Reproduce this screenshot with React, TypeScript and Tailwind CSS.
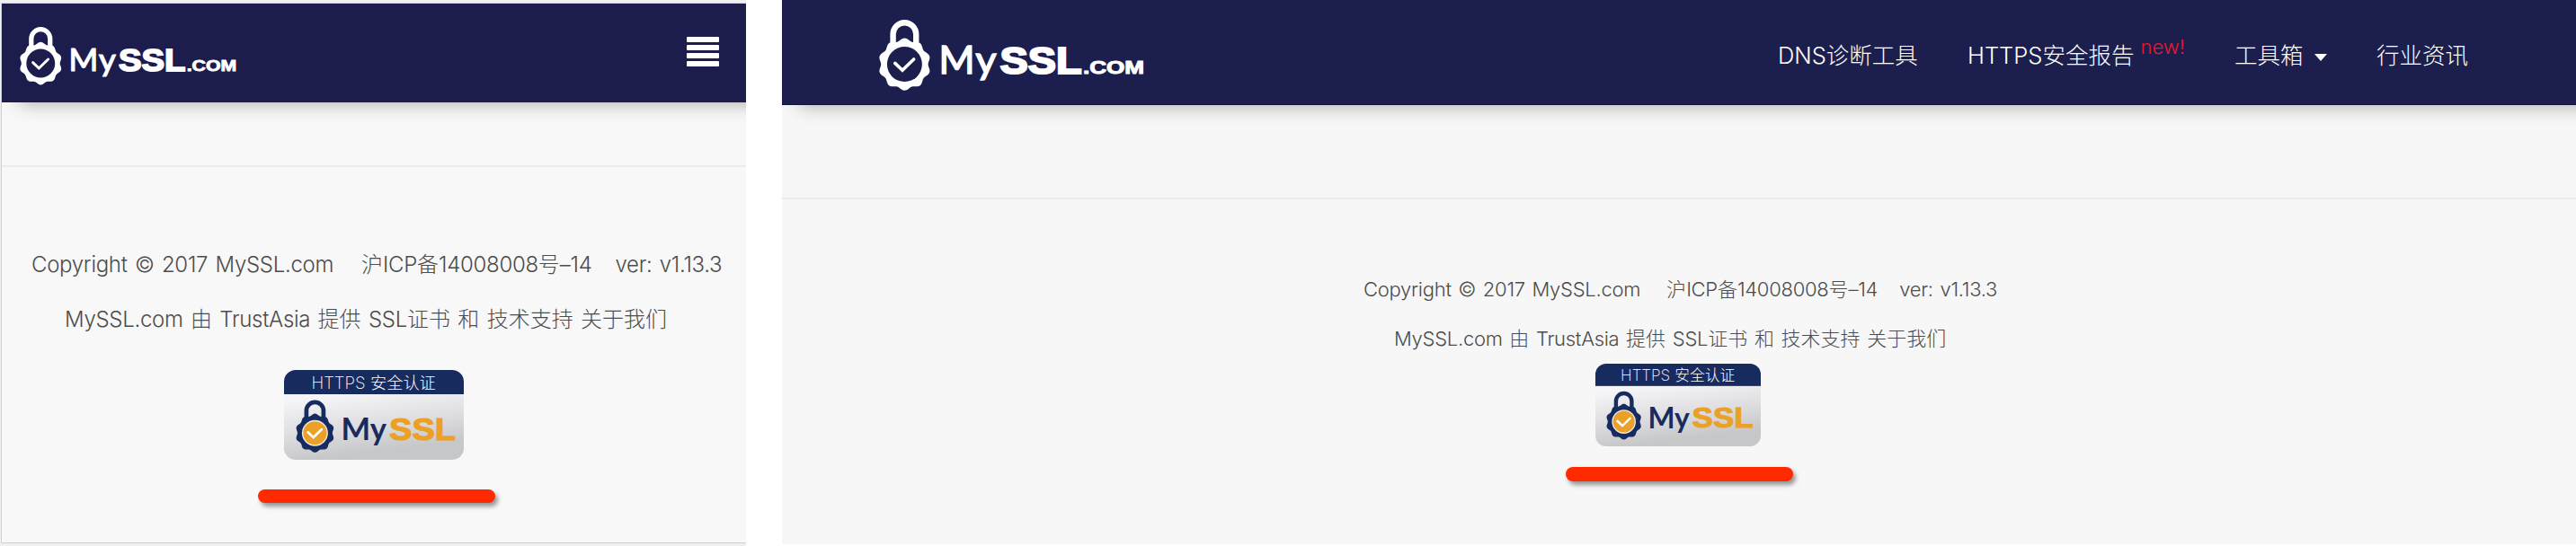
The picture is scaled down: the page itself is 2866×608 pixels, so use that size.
import React from "react";

const CJK = "font-['Inter','Noto_Sans_CJK_SC',sans-serif]";

// Ten-lobed seal outline centred on the origin
const SEAL =
  Array.from({ length: 120 }, (_, i) => {
    const a = (i / 120) * Math.PI * 2;
    const r = 27.7 + 1.5 * Math.cos(10 * a);
    return `${i ? "L" : "M"}${(r * Math.sin(a)).toFixed(2)} ${(-r * Math.cos(a)).toFixed(2)}`;
  }).join("") + "Z";

function Lock({ color, hole, disc, check, transform }: { color: string; hole: string; disc?: string; check: string; transform: string }) {
  return (
    <g transform={transform}>
      <path d="M-12.8 -20V-33.5a12.8 12.8 0 0 1 25.6 0V-20" fill="none" stroke={color} strokeWidth="6.4" />
      <path d={SEAL} fill={color} />
      <circle r="19.5" fill={hole} />
      {disc && <circle r="17.6" fill={disc} />}
      <path d="M-10.6 -1.2L-2.4 6.6L10.2 -5.6" fill="none" stroke={check} strokeWidth="3.6" strokeLinecap="round" />
    </g>
  );
}

function Logo({ className, bg }: { className: string; bg: string }) {
  return (
    <svg viewBox="0 0 295 79" className={className} fill="#fff">
      <Lock color="#fff" hole={bg} check="#fff" transform="translate(28.4 49.6)" />
      <text y="60.4" fontSize="42.5" fontFamily="Lato" fontWeight="400" stroke="#fff" strokeWidth="1.5">
        <tspan x="66.5" textLength="40" lengthAdjust="spacingAndGlyphs">M</tspan>
        <tspan x="107.5" textLength="23" lengthAdjust="spacingAndGlyphs">y</tspan>
      </text>
      <text x="134.5" y="60" fontSize="42.5" fontFamily="Liberation Sans" fontWeight="700" textLength="91" lengthAdjust="spacingAndGlyphs" stroke="#fff" strokeWidth="2.2">SSL</text>
      <text x="227" y="60.4" fontSize="20" fontFamily="Liberation Sans" fontWeight="700" textLength="68" lengthAdjust="spacingAndGlyphs" stroke="#fff" strokeWidth="1">.COM</text>
    </svg>
  );
}

function Badge({ className, id }: { className: string; id: string }) {
  return (
    <svg viewBox="0 0 200 100" className={className}>
      <defs>
        <linearGradient id={id} x1="0.35" y1="0" x2="0.6" y2="1">
          <stop offset="0.25" stopColor="#f5f5f7" />
          <stop offset="0.6" stopColor="#dedee0" />
          <stop offset="0.9" stopColor="#c6c7c9" />
        </linearGradient>
        <clipPath id={id + "-clip"}>
          <rect width="200" height="100" rx="13" />
        </clipPath>
      </defs>
      <g clipPath={`url(#${id}-clip)`}>
        <rect width="200" height="100" fill={`url(#${id})`} />
        <rect width="200" height="27" fill="#182b5f" />
      </g>
      <text x="30.5" y="21" fontSize="18.7" fontFamily="Inter" fontWeight="200" fill="#fff" textLength="60" lengthAdjust="spacingAndGlyphs">HTTPS</text>
      <text x="96" y="20.8" fontSize="18.2" fontFamily="Noto Sans CJK SC" fontWeight="300" fill="#fff">安全认证</text>
      <Lock color="#182b5f" hole="#ececee" disc="#eba028" check="#fff" transform="translate(34.4 70.2) scale(0.742)" />
      <text x="63.5" y="78" fontSize="35" fontFamily="Lato" fontWeight="700" fill="#182b5f" textLength="50.5" lengthAdjust="spacingAndGlyphs">My</text>
      <text x="117" y="77.6" fontSize="34.6" fontFamily="Liberation Sans" fontWeight="700" fill="#eba028" textLength="74" lengthAdjust="spacingAndGlyphs" stroke="#eba028" strokeWidth="1.2">SSL</text>
    </svg>
  );
}

// Latin runs are set a little tighter than the Chinese ones
function Mixed({ text }: { text: string }) {
  return (
    <>
      {text.split(/([\u4e00-\u9fff]+)/).map((run, i) =>
        i % 2 ? <span key={i}>{run}</span> : <span key={i} className="tracking-[-0.0125em] [word-spacing:0.08em]">{run}</span>
      )}
    </>
  );
}

function FooterText({ first, second, gap }: { first: string; second: string; gap: string }) {
  return (
    <>
      <p className={first}>
        <span><Mixed text="Copyright © 2017 MySSL.com" /></span>
        <span className={gap}><Mixed text="沪ICP备14008008号–14" /></span>
        <span><Mixed text="ver: v1.13.3" /></span>
      </p>
      <p className={second}><Mixed text="MySSL.com 由 TrustAsia 提供 SSL证书 和 技术支持 关于我们" /></p>
    </>
  );
}

function MobileView() {
  return (
    <section className="flex h-[608px] w-[830px] shrink-0 flex-col overflow-hidden bg-[#f0f0f0] pt-[3px] pl-px">
      <div className="flex h-[602px] flex-col border-t border-b border-l border-[#cfd0d2] bg-[#f8f8f8]">
        <header className="-mr-[60px] flex h-[110px] shrink-0 items-start justify-between bg-[#1c1d4d] pr-[90px] pl-5 shadow-[0_20px_20px_-20px_rgba(0,0,0,0.35)]">
          <Logo className="mt-[26px] h-[64.6px] w-[241.3px]" bg="#1c1d4d" />
          <div className="mt-[37px] flex w-9 flex-col gap-[3px]">
            {[0, 1, 2, 3].map((i) => (
              <span key={i} className="h-1.5 rounded-[1px] bg-white" />
            ))}
          </div>
        </header>
        <footer className={`mt-[70px] flex flex-col items-center border-t-2 border-[#e9eaec] text-[24px] leading-[60px] font-light whitespace-pre text-[#4c4c4c] ${CJK}`}>
          <FooterText
            first="mt-[79px] flex h-[61px] w-full pl-[33px]"
            second="flex h-[60px] w-full pl-[70px]"
            gap="mr-[26px] ml-[31px]"
          />
          <Badge id="badge-m" className="mt-[26px] h-[100px] w-[200px]" />
          <div className="mt-[33px] mr-[-6px] h-[15px] w-[264px] rounded-full bg-[#ff2a00] shadow-[3px_4px_5px_rgba(0,0,0,0.4)]" />
        </footer>
      </div>
    </section>
  );
}

function DesktopView() {
  return (
    <section className="flex h-[606px] w-[1996px] shrink-0 flex-col overflow-hidden bg-[#f7f7f7]">
      <header className={`-mr-[60px] flex h-[117px] shrink-0 items-start border-b border-[#10133f] bg-[#1c1f4d] pl-[108px] text-[25.5px] leading-[40px] font-light whitespace-pre text-white shadow-[0_20px_20px_-20px_rgba(0,0,0,0.35)] ${CJK}`}>
        <Logo className="mt-[22px] h-[79px] w-[295px]" bg="#1c1f4d" />
        <nav className="mt-[42px] ml-[705px] flex">
          <a className="w-[211px]">DNS诊断工具</a>
          <a className="flex w-[297px]">
            HTTPS安全报告
            <span className="-mt-[10px] ml-[7px] text-[22px] text-[#e8192c]">new!</span>
          </a>
          <a className="flex w-[158px] items-center">
            工具箱
            <svg viewBox="0 0 14 8" className="mt-[3px] ml-[12px] h-2 w-[14px]" fill="#fff">
              <path d="M0 0H14L7 8Z" />
            </svg>
          </a>
          <a>行业资讯</a>
        </nav>
      </header>
      <footer className={`mt-[103px] flex flex-col items-center border-t-2 border-[#ececee] text-[22px] leading-[55px] font-light whitespace-pre text-[#4c4c4c] ${CJK}`}>
        <FooterText
          first="mt-[73px] flex h-[55px] w-full pl-[647px]"
          second="flex h-[55px] w-full pl-[681px]"
          gap="mr-[24px] ml-[29px]"
        />
        <Badge id="badge-d" className="-ml-0.5 h-[92px] w-[184px]" />
        <div className="mt-[23px] h-4 w-[253px] rounded-full bg-[#ff2a00] shadow-[3px_4px_5px_rgba(0,0,0,0.4)]" />
      </footer>
    </section>
  );
}

export default function App() {
  return (
    <main className="flex h-[608px] w-[2866px] gap-10 overflow-hidden bg-white">
      <MobileView />
      <DesktopView />
    </main>
  );
}
